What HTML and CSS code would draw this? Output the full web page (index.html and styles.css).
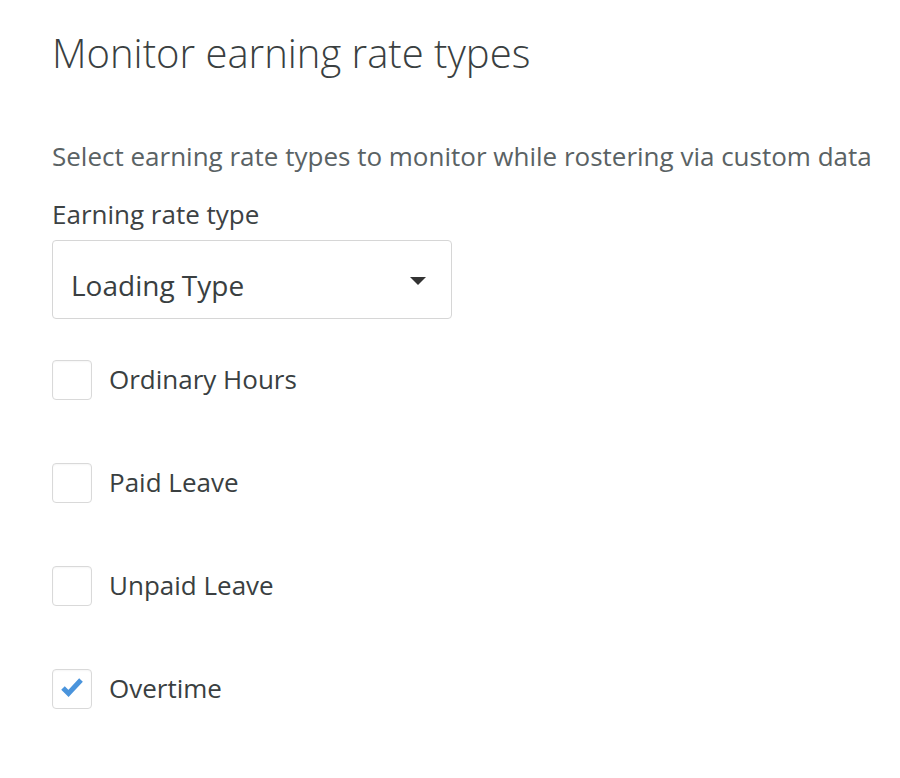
FILE: index.html
```html
<!DOCTYPE html>
<html>
<head>
<meta charset="utf-8">
<link rel="stylesheet" href="styles.css">
</head>
<body>
<div class="page">
  <h1 class="title">Monitor earning rate types</h1>
  <p class="desc">Select earning rate types to monitor while rostering via custom data</p>
  <label class="field-label">Earning rate type</label>
  <div class="select">
    <span class="select-value">Loading Type</span>
    <span class="caret"></span>
  </div>
  <ul class="checks">
    <li class="check-row"><span class="box"></span><span class="check-label">Ordinary Hours</span></li>
    <li class="check-row"><span class="box"></span><span class="check-label">Paid Leave</span></li>
    <li class="check-row"><span class="box"></span><span class="check-label">Unpaid Leave</span></li>
    <li class="check-row"><span class="box checked"><svg viewBox="0 0 38 38" width="38" height="38"><path d="M10 18 L15.5 23.5 L28 10" fill="none" stroke="#4a94dc" stroke-width="5" stroke-linejoin="miter" stroke-linecap="butt"/></svg></span><span class="check-label">Overtime</span></li>
  </ul>
</div>
</body>
</html>
```
FILE: styles.css
```css
html, body {
  margin: 0;
  padding: 0;
  background: #fff;
}
body {
  font-family: "Open Sans", "Liberation Sans", sans-serif;
  color: #333;
}
.page {
  padding: 26px 0 0 52px;
}
.title {
  margin: 0;
  font-size: 40px;
  font-weight: 300;
  color: #3a3f41;
  line-height: 54px;
}
.desc {
  margin: 59px 0 0;
  font-size: 26px;
  line-height: 34px;
  color: #5a6264;
}
.field-label {
  display: block;
  margin-top: 24px;
  font-size: 26px;
  line-height: 34px;
  color: #3d4244;
}
.select {
  margin-top: 9px;
  width: 355px;
  height: 67px;
  padding: 10px 25px 0 18px;
  border: 1px solid #d6d6d6;
  border-radius: 4px;
  box-sizing: content-box;
  display: flex;
  align-items: center;
  justify-content: space-between;
}
.select-value {
  font-size: 28px;
  color: #3a3f41;
}
.caret {
  width: 0;
  height: 0;
  margin-bottom: 8px;
  border-left: 8px solid transparent;
  border-right: 8px solid transparent;
  border-top: 8px solid #333;
}
.checks {
  list-style: none;
  margin: 41px 0 0;
  padding: 0;
  display: flex;
  flex-direction: column;
  gap: 63px;
}
.check-row {
  display: flex;
  align-items: center;
  height: 40px;
}
.box {
  width: 38px;
  height: 38px;
  border: 1px solid #d9d9d9;
  border-radius: 4px;
  display: block;
  background: #fff;
  box-shadow: inset 0 1px 2px rgba(0,0,0,0.04);
  flex: none;
}
.box svg {
  display: block;
}
.check-label {
  margin-left: 17px;
  margin-bottom: 2px;
  font-size: 26px;
  line-height: 36px;
  color: #3a3f41;
}
```
